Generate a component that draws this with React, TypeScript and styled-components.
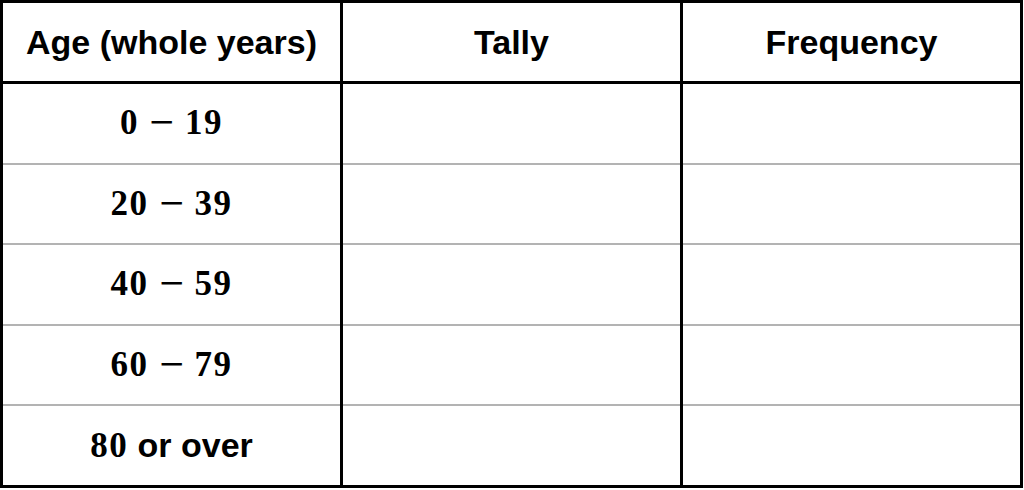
import React from 'react';
import styled, { createGlobalStyle } from 'styled-components';

const GlobalStyle = createGlobalStyle`
  html, body {
    margin: 0;
    padding: 0;
    background: #ffffff;
  }
`;

const Table = styled.table`
  width: 1023px;
  height: 488px;
  border-collapse: collapse;
  table-layout: fixed;
  border: 3px solid #000;
`;

const HeadCell = styled.th`
  height: 78px;
  padding: 0;
  border: 3px solid #000;
  font-family: 'Liberation Sans', Arial, sans-serif;
  font-weight: 700;
  font-size: 34px;
  color: #000;
  text-align: center;
  vertical-align: middle;
`;

const Cell = styled.td`
  padding: 0;
  border-left: 3px solid #000;
  border-right: 3px solid #000;
  border-top: 2px solid #b3b3b3;
  border-bottom: 2px solid #b3b3b3;
  text-align: center;
  vertical-align: middle;
  color: #000;
`;

const Range = styled.span`
  font-family: 'Liberation Serif', 'Times New Roman', serif;
  font-weight: 700;
  font-size: 35px;
  letter-spacing: 1.5px;
`;

const Minus = styled.span`
  display: inline-block;
  margin: 0 1px 0 3px;
  transform: scaleX(1.25);
`;

const Words = styled.span`
  font-family: 'Liberation Sans', Arial, sans-serif;
  font-weight: 700;
  font-size: 34px;
`;

const ranges: [string, string][] = [
  ['0', '19'],
  ['20', '39'],
  ['40', '59'],
  ['60', '79'],
];

export default function App() {
  return (
    <>
      <GlobalStyle />
      <Table>
        <thead>
          <tr>
            <HeadCell>Age (whole years)</HeadCell>
            <HeadCell>Tally</HeadCell>
            <HeadCell>Frequency</HeadCell>
          </tr>
        </thead>
        <tbody>
          {ranges.map(([from, to]) => (
            <tr key={from}>
              <Cell>
                <Range>
                  {from} <Minus>−</Minus> {to}
                </Range>
              </Cell>
              <Cell />
              <Cell />
            </tr>
          ))}
          <tr>
            <Cell>
              <Range>80</Range>
              <Words> or over</Words>
            </Cell>
            <Cell />
            <Cell />
          </tr>
        </tbody>
      </Table>
    </>
  );
}
